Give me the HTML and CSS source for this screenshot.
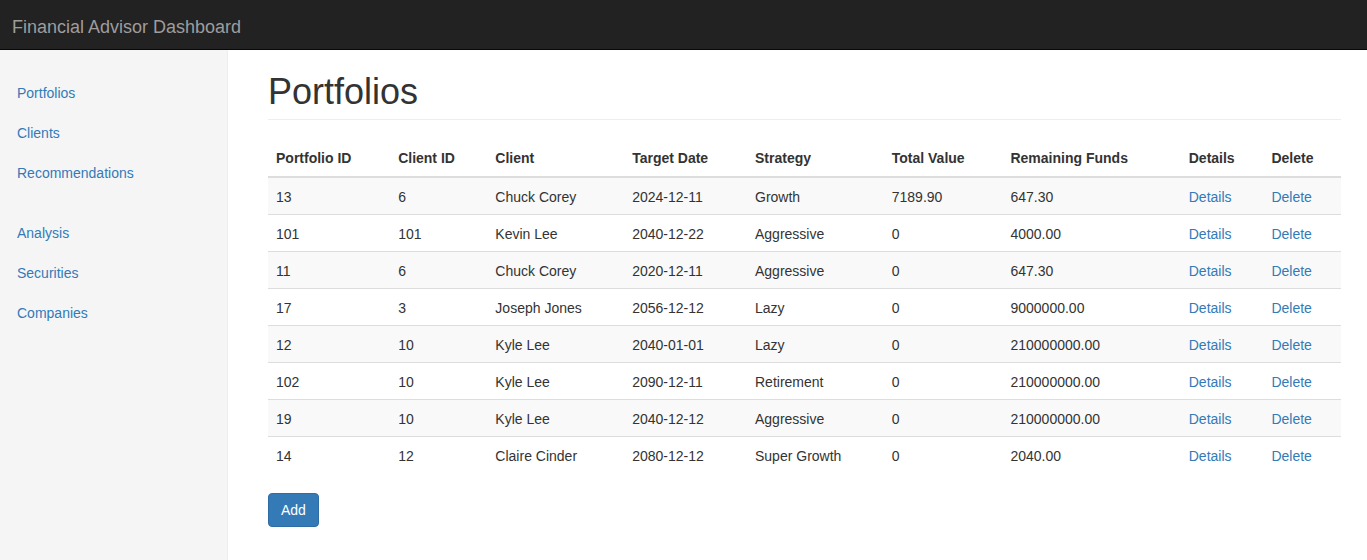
FILE: index.html
```html
<!DOCTYPE html>
<html>
<head>
<meta charset="utf-8">
<title>Financial Advisor Dashboard</title>
<link rel="stylesheet" href="styles.css">
</head>
<body>
<nav class="navbar"><a class="brand" href="#">Financial Advisor Dashboard</a></nav>
<div class="layout">
  <aside class="sidebar">
    <ul class="side-nav">
      <li><a href="#">Portfolios</a></li>
      <li><a href="#">Clients</a></li>
      <li><a href="#">Recommendations</a></li>
    </ul>
    <ul class="side-nav">
      <li><a href="#">Analysis</a></li>
      <li><a href="#">Securities</a></li>
      <li><a href="#">Companies</a></li>
    </ul>
  </aside>
  <main class="main">
    <h1 class="page-header">Portfolios</h1>
    <table class="table">
      <thead>
        <tr><th>Portfolio ID</th><th>Client ID</th><th>Client</th><th>Target Date</th><th>Strategy</th><th>Total Value</th><th>Remaining Funds</th><th>Details</th><th>Delete</th></tr>
      </thead>
      <tbody>
        <tr><td>13</td><td>6</td><td>Chuck Corey</td><td>2024-12-11</td><td>Growth</td><td>7189.90</td><td>647.30</td><td><a href="#">Details</a></td><td><a href="#">Delete</a></td></tr>
        <tr><td>101</td><td>101</td><td>Kevin Lee</td><td>2040-12-22</td><td>Aggressive</td><td>0</td><td>4000.00</td><td><a href="#">Details</a></td><td><a href="#">Delete</a></td></tr>
        <tr><td>11</td><td>6</td><td>Chuck Corey</td><td>2020-12-11</td><td>Aggressive</td><td>0</td><td>647.30</td><td><a href="#">Details</a></td><td><a href="#">Delete</a></td></tr>
        <tr><td>17</td><td>3</td><td>Joseph Jones</td><td>2056-12-12</td><td>Lazy</td><td>0</td><td>9000000.00</td><td><a href="#">Details</a></td><td><a href="#">Delete</a></td></tr>
        <tr><td>12</td><td>10</td><td>Kyle Lee</td><td>2040-01-01</td><td>Lazy</td><td>0</td><td>210000000.00</td><td><a href="#">Details</a></td><td><a href="#">Delete</a></td></tr>
        <tr><td>102</td><td>10</td><td>Kyle Lee</td><td>2090-12-11</td><td>Retirement</td><td>0</td><td>210000000.00</td><td><a href="#">Details</a></td><td><a href="#">Delete</a></td></tr>
        <tr><td>19</td><td>10</td><td>Kyle Lee</td><td>2040-12-12</td><td>Aggressive</td><td>0</td><td>210000000.00</td><td><a href="#">Details</a></td><td><a href="#">Delete</a></td></tr>
        <tr><td>14</td><td>12</td><td>Claire Cinder</td><td>2080-12-12</td><td>Super Growth</td><td>0</td><td>2040.00</td><td><a href="#">Details</a></td><td><a href="#">Delete</a></td></tr>
      </tbody>
    </table>
    <button class="btn" type="button">Add</button>
  </main>
</div>
</body>
</html>
```
FILE: styles.css
```css
* { box-sizing: border-box; }
html, body { margin: 0; padding: 0; }
body {
  font-family: "Liberation Sans", Arial, sans-serif;
  font-size: 14px;
  line-height: 20px;
  color: #333;
  background: #fff;
}
a { color: #337ab7; text-decoration: none; }
.navbar {
  height: 50px;
  background: #222;
  border-bottom: 1px solid #080808;
  display: flex;
  align-items: flex-start;
}
.brand {
  color: #9d9d9d;
  font-size: 18px;
  line-height: 20px;
  padding: 17px 12px 13px;
}
.layout {
  display: flex;
  min-height: 510px;
}
.sidebar {
  width: 228px;
  flex: 0 0 228px;
  background: #f5f5f5;
  border-right: 1px solid #eee;
  padding: 22px 0 20px 0;
}
.side-nav {
  list-style: none;
  margin: 0 0 20px 0;
  padding: 0;
}
.side-nav li a {
  display: block;
  padding: 11px 17px 9px;
  line-height: 20px;
}
.main {
  flex: 1;
  padding: 20px 26px 20px 40px;
}
.page-header {
  font-family: "Liberation Sans", Arial, sans-serif;
  font-weight: 500;
  font-size: 36px;
  line-height: 39.6px;
  margin: 0 0 20px 0;
  padding: 2px 0 7px;
  border-bottom: 1px solid #eee;
  color: #333;
}
.table {
  width: 100%;
  border-collapse: collapse;
  border-spacing: 0;
  margin-bottom: 20px;
}
.table th, .table td {
  padding: 8px;
  line-height: 20px;
  text-align: left;
  vertical-align: top;
}
.table td { padding: 9px 8px 7px; }
.table th {
  font-weight: bold;
  border-bottom: 2px solid #ddd;
  vertical-align: bottom;
}
.table td { border-top: 1px solid #ddd; }
.table tbody tr:nth-child(odd) { background: #f9f9f9; }
.btn {
  font-family: "Liberation Sans", Arial, sans-serif;
  font-size: 14px;
  line-height: 20px;
  padding: 6px 12px;
  color: #fff;
  background: #337ab7;
  border: 1px solid #2e6da4;
  border-radius: 4px;
  cursor: pointer;
}
```
